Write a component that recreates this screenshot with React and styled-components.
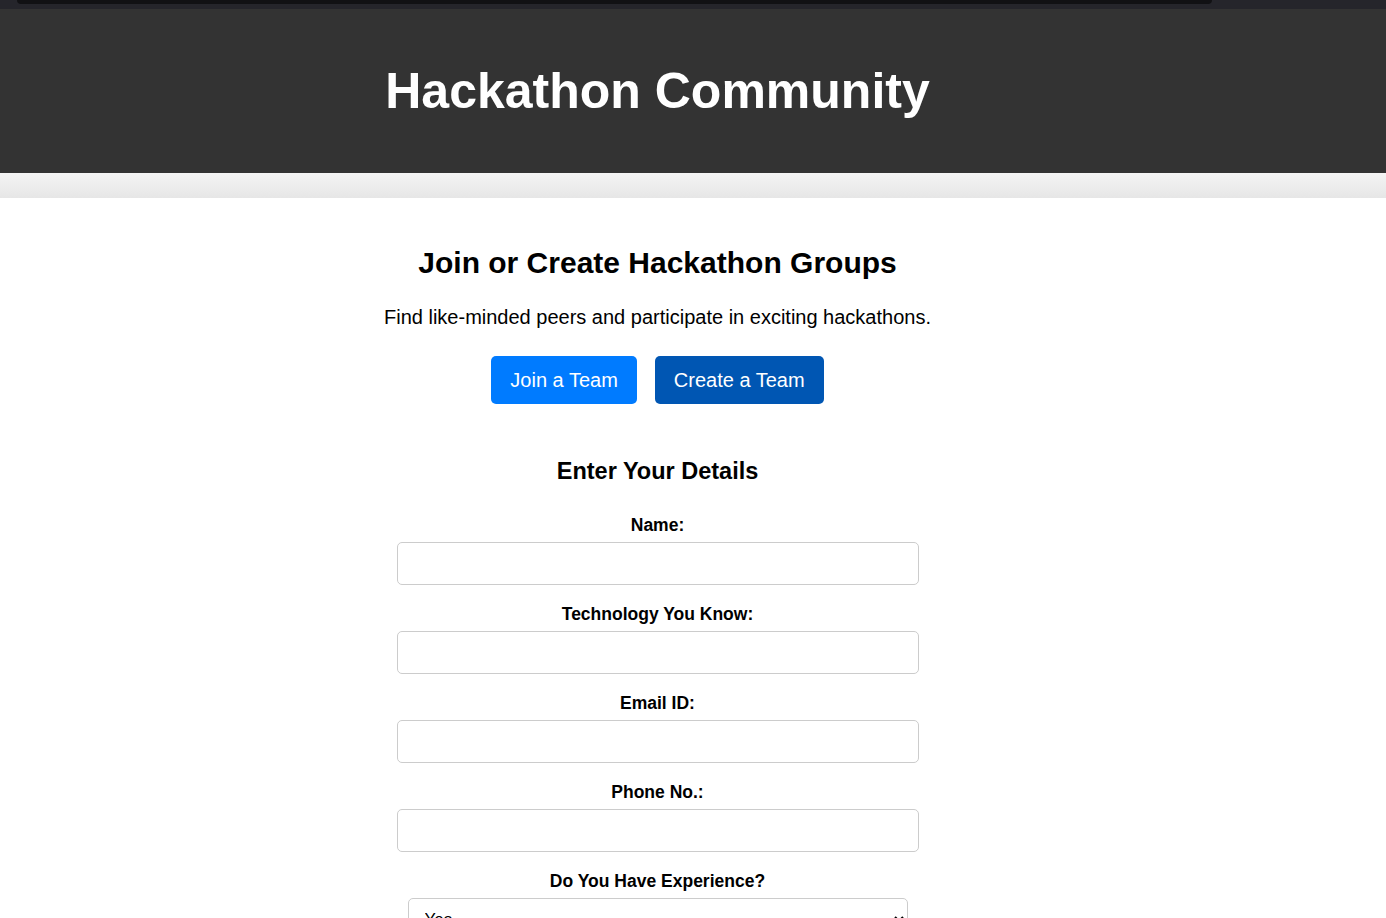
import React from "react"
import styled, { createGlobalStyle } from "styled-components"

const GlobalStyle = createGlobalStyle`
  body {
    margin: 0;
    font-family: "Liberation Sans", Arial, sans-serif;
    background: #fff;
    color: #000;
  }
`

const fields = ["Name:", "Technology You Know:", "Email ID:", "Phone No.:"]

const App = () => {
  return (
    <>
      <GlobalStyle />
      <TopStrip>
        <TopBar />
      </TopStrip>
      <Header>
        <Inner>
          <Title>Hackathon Community</Title>
        </Inner>
      </Header>
      <Band />
      <Main>
        <Heading>Join or Create Hackathon Groups</Heading>
        <Lead>Find like-minded peers and participate in exciting hackathons.</Lead>
        <ButtonRow>
          <Btn>Join a Team</Btn>
          <Btn $dark>Create a Team</Btn>
        </ButtonRow>
        <Form>
          <FormTitle>Enter Your Details</FormTitle>
          {fields.map((f) => (
            <Field key={f}>
              <Label>{f}</Label>
              <Input type="text" />
            </Field>
          ))}
          <Field>
            <Label>Do You Have Experience?</Label>
            <Select defaultValue="Yes">
              <option>Yes</option>
              <option>No</option>
            </Select>
          </Field>
        </Form>
      </Main>
    </>
  )
}

const TopStrip = styled.div`
  height: 9px;
  background: #25252b;
  padding-left: 17px;
`
const TopBar = styled.div`
  width: 1195px;
  height: 4px;
  background: #111114;
  border-radius: 0 0 6px 6px;
`

const Header = styled.header`
  background: #333;
  height: 164px;
`
const Inner = styled.div`
  width: 1315px;
  height: 100%;
  display: flex;
  align-items: center;
  justify-content: center;
`
const Title = styled.h1`
  margin: 0;
  color: #fff;
  font-size: 50px;
  font-weight: 700;
`

const Band = styled.div`
  height: 25px;
  background: linear-gradient(#f4f4f4, #e6e6e6);
`

const Main = styled.main`
  width: 1315px;
  display: flex;
  flex-direction: column;
  align-items: center;
  padding-top: 48px;
`
const Heading = styled.h2`
  margin: 0;
  font-size: 30px;
  font-weight: 700;
`
const Lead = styled.p`
  margin: 26px 0 0;
  font-size: 20px;
`
const ButtonRow = styled.div`
  display: flex;
  gap: 18px;
  margin-top: 27px;
`
const Btn = styled.button`
  height: 48px;
  padding: 0 19px;
  border: none;
  border-radius: 5px;
  background: ${(p) => (p.$dark ? "#0056b3" : "#007bff")};
  color: #fff;
  font-family: "Liberation Sans", Arial, sans-serif;
  font-size: 20px;
  cursor: pointer;
`

const Form = styled.form`
  display: flex;
  flex-direction: column;
  align-items: center;
  margin-top: 54px;
`
const FormTitle = styled.h3`
  margin: 0 0 30px;
  font-size: 23.5px;
  font-weight: 700;
`
const Field = styled.div`
  display: flex;
  flex-direction: column;
  align-items: center;
  margin-bottom: 19px;
`
const Label = styled.label`
  font-size: 17.5px;
  font-weight: 700;
  margin-bottom: 6px;
`
const Input = styled.input`
  box-sizing: border-box;
  width: 522px;
  height: 43px;
  border: 1px solid #ccc;
  border-radius: 5px;
  padding: 0 12px;
  font-size: 16px;
`
const Select = styled.select`
  box-sizing: border-box;
  width: 500px;
  height: 43px;
  border: 1px solid #ccc;
  border-radius: 5px;
  padding: 0 12px;
  font-family: "Liberation Sans", Arial, sans-serif;
  font-size: 17px;
  background: #fff;
`

export default App
